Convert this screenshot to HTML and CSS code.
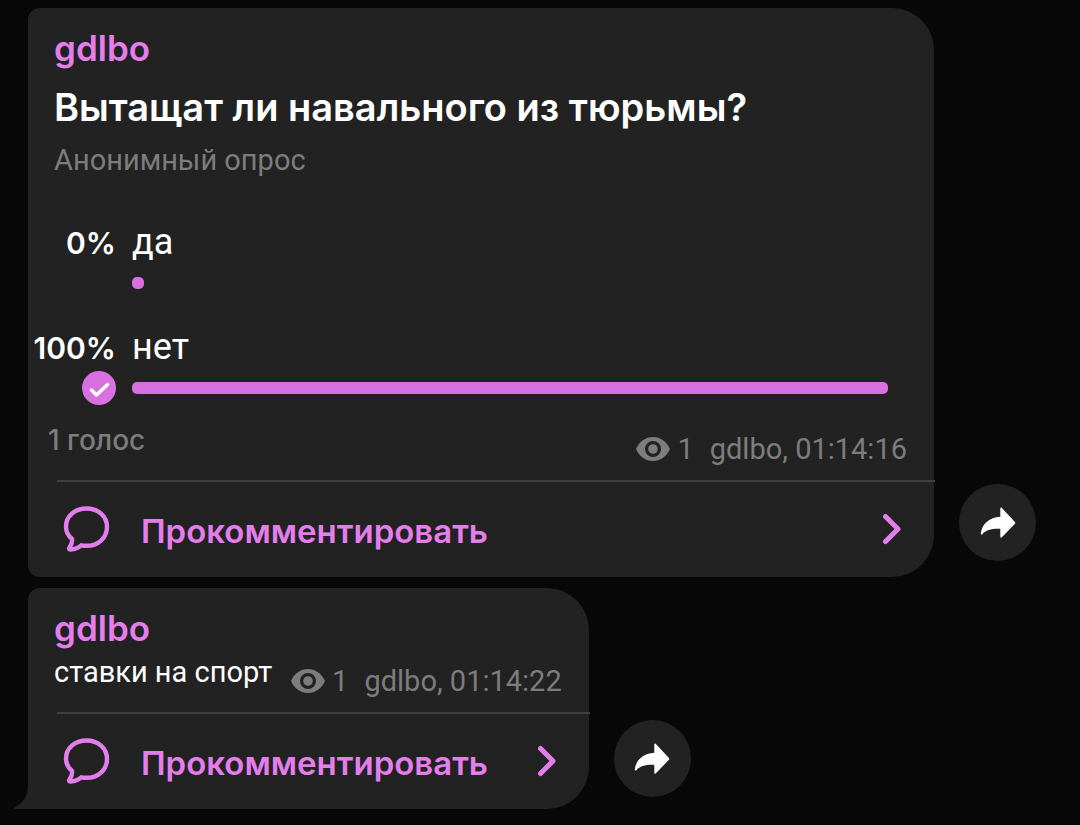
FILE: index.html
```html
<!DOCTYPE html>
<html lang="ru">
<head>
<meta charset="utf-8">
<meta name="viewport" content="width=device-width, initial-scale=1">
<title>gdlbo</title>
<link rel="stylesheet" href="styles.css">
</head>
<body>
<svg class="sprite" aria-hidden="true">
  <symbol id="eye" viewBox="0 0 34 26">
    <path fill-rule="evenodd" d="M17 1C9.500 1 3.200 5.800 0 13c3.200 7.200 9.500 12 17 12s13.800-4.800 17-12C30.800 5.800 24.500 1 17 1zm0 4a8 8 0 1 1 0 16 8 8 0 0 1 0-16zm0 3.200a4.800 4.800 0 1 0 0 9.600 4.800 4.800 0 0 0 0-9.600z"/>
  </symbol>
  <symbol id="comment" viewBox="0 0 48 48">
    <path d="M24.500 3.500C12.800 3.500 4 11 4 21.500c0 5 2.500 9.500 6 12.500 .6 3.500-.6 6-2.700 8.800-.6 1 0 1.800 1 1.700 4.500-.4 8-1.600 11-4.200 1.700.3 3.400.5 5.200.5C36 40.800 45 33 45 22S36 3.500 24.500 3.500z" fill="none" stroke="currentColor" stroke-width="4.400" stroke-linejoin="round"/>
  </symbol>
  <symbol id="chevron" viewBox="0 0 20 32">
    <path d="M3.500 3.500L16 16 3.500 28.500" fill="none" stroke="currentColor" stroke-width="5" stroke-linecap="round" stroke-linejoin="round"/>
  </symbol>
  <symbol id="share" viewBox="0 0 36 32">
    <path d="M20.300 1.600c0-1 .9-1.300 1.600-.6l13 14c.5.600.5 1.200 0 1.800l-13 13.500c-.7.700-1.600.4-1.600-.5v-8C11.500 21.500 6 23 2.300 27.200c-.6.600-1.600.300-1.500-.7C2 16.500 9.500 10.600 20.300 9.800z" fill="currentColor"/>
  </symbol>
</svg>
<main class="chat">
  <article class="row row-poll">
    <div class="bubble bubble-wide">
      <div class="content">
        <a class="author" href="#author">gdlbo</a>
        <h1 class="question">Вытащат ли навального из тюрьмы?</h1>
        <p class="kind">Анонимный опрос</p>
        <ul class="options">
          <li class="option">
            <span class="percent">0%</span>
            <span class="label">да</span>
            <span class="mark"></span>
            <span class="track"><span class="bar" style="width:0%"></span></span>
          </li>
          <li class="option">
            <span class="percent">100%</span>
            <span class="label">нет</span>
            <span class="mark">
              <svg class="check" viewBox="0 0 34 34" role="img" aria-label="Ваш голос"><circle cx="17" cy="17" r="17"/><path d="M9.500 19l5 5L25.500 13.500"/></svg>
            </span>
            <span class="track"><span class="bar" style="width:100%"></span></span>
          </li>
        </ul>
        <div class="stats">
          <span class="votes">1 голос</span>
          <span class="meta"><svg class="eye"><use href="#eye"/></svg><span class="views">1</span><span>gdlbo, <time>01:14:16</time></span></span>
        </div>
      </div>
      <button class="comments" type="button">
        <svg class="comment-icon"><use href="#comment"/></svg>
        <span>Прокомментировать</span>
        <svg class="chevron"><use href="#chevron"/></svg>
      </button>
    </div>
    <button class="share" type="button" aria-label="Поделиться"><svg class="share-icon"><use href="#share"/></svg></button>
  </article>
  <article class="row">
    <div class="bubble bubble-last">
      <div class="content">
        <a class="author" href="#author">gdlbo</a>
        <div class="message">
          <p class="text">ставки на спорт</p>
          <span class="meta"><svg class="eye"><use href="#eye"/></svg><span class="views">1</span><span>gdlbo, <time>01:14:22</time></span></span>
        </div>
      </div>
      <button class="comments" type="button">
        <svg class="comment-icon"><use href="#comment"/></svg>
        <span>Прокомментировать</span>
        <svg class="chevron"><use href="#chevron"/></svg>
      </button>
      <svg class="tail" viewBox="0 0 16 24" aria-hidden="true"><path d="M14 0C14 11 9 18 1 22q-2 2 0 2H16V0z"/></svg>
    </div>
    <button class="share" type="button" aria-label="Поделиться"><svg class="share-icon"><use href="#share"/></svg></button>
  </article>
</main>
</body>
</html>
```
FILE: styles.css
```css
* { box-sizing: border-box; }
body {
  margin: 0;
  min-height: 100vh;
  background: #080808;
  color: #fff;
  font-family: Roboto, "Noto Sans", sans-serif;
}
h1, p, ul { margin: 0; padding: 0; }
.sprite { position: absolute; width: 0; height: 0; }
.chat {
  display: flex;
  flex-direction: column;
  gap: 11px;
  padding: 8px 44px 16px 28px;
}
.row { display: flex; align-items: flex-end; gap: 25px; }
.bubble {
  position: relative;
  background: #222;
  border-radius: 12px 42px 42px 12px;
}
.bubble-wide { flex: 1; }
.bubble-last { border-bottom-left-radius: 0; }
.content { padding: 20px 27px 15px 26px; }
.author {
  display: block;
  width: fit-content;
  color: #e47eec;
  font: 600 35px/40px Inter, sans-serif;
  text-decoration: none;
}
.question { margin-top: 15px; font: 600 38px/48px Inter, sans-serif; }
.kind { margin-top: 13px; color: #7d7d7d; font-size: 29px; line-height: 32px; }
.options {
  display: grid;
  gap: 27px;
  margin: 46px 19px 0 -26px;
  list-style: none;
}
.option {
  display: grid;
  grid-template-columns: 88px 1fr;
  grid-template-rows: 40px 34px;
  gap: 4px 16px;
  align-items: center;
}
.percent { justify-self: end; padding-top: 2px; font: 600 30px/38px Inter, sans-serif; }
.label { font-size: 36px; line-height: 40px; }
.mark { justify-self: end; height: 34px; }
.check { display: block; width: 34px; height: 34px; }
.check circle { fill: #d970e0; }
.check path {
  fill: none;
  stroke: #fff;
  stroke-width: 3.500;
  stroke-linecap: round;
  stroke-linejoin: round;
}
.bar {
  display: block;
  min-width: 12px;
  height: 12px;
  border-radius: 5px;
  background: #d970e0;
}
.stats {
  display: flex;
  justify-content: space-between;
  margin: 18px 0 0 -6px;
}
.votes { color: #7d7d7d; font: 500 28px/34px Inter, sans-serif; }
.meta {
  display: flex;
  align-items: center;
  padding-top: 10px;
  color: #7d7d7d;
  font-size: 29px;
  line-height: 32px;
  white-space: nowrap;
}
.eye { width: 34px; height: 26px; fill: #7d7d7d; }
.views { margin: 0 16px 0 7px; }
.message { display: flex; gap: 19px; margin-top: 7px; }
.text { font-size: 29px; line-height: 34px; }
.comments {
  position: relative;
  display: flex;
  align-items: center;
  width: 100%;
  height: 97px;
  padding: 0 32px 0 34px;
  border: 0;
  background: none;
  color: #e47eec;
  font: 600 33px/40px Inter, sans-serif;
  cursor: pointer;
}
.comments span { padding-top: 4px; }
.comments::before {
  content: "";
  position: absolute;
  top: 0;
  left: 29px;
  right: -1px;
  height: 2px;
  background: #404040;
}
.comment-icon { width: 48px; height: 48px; margin-right: 31px; }
.chevron { width: 20px; height: 32px; margin-left: auto; }
.tail {
  position: absolute;
  left: -14px;
  bottom: 0;
  width: 16px;
  height: 24px;
  fill: #222;
}
.share {
  display: grid;
  place-items: center;
  width: 77px;
  height: 77px;
  margin-bottom: 12px;
  padding: 0;
  border: 0;
  border-radius: 50%;
  background: #222;
  color: #fff;
  cursor: pointer;
}
.row-poll .share { margin-bottom: 16px; }
.share-icon { width: 36px; height: 32px; }
```
